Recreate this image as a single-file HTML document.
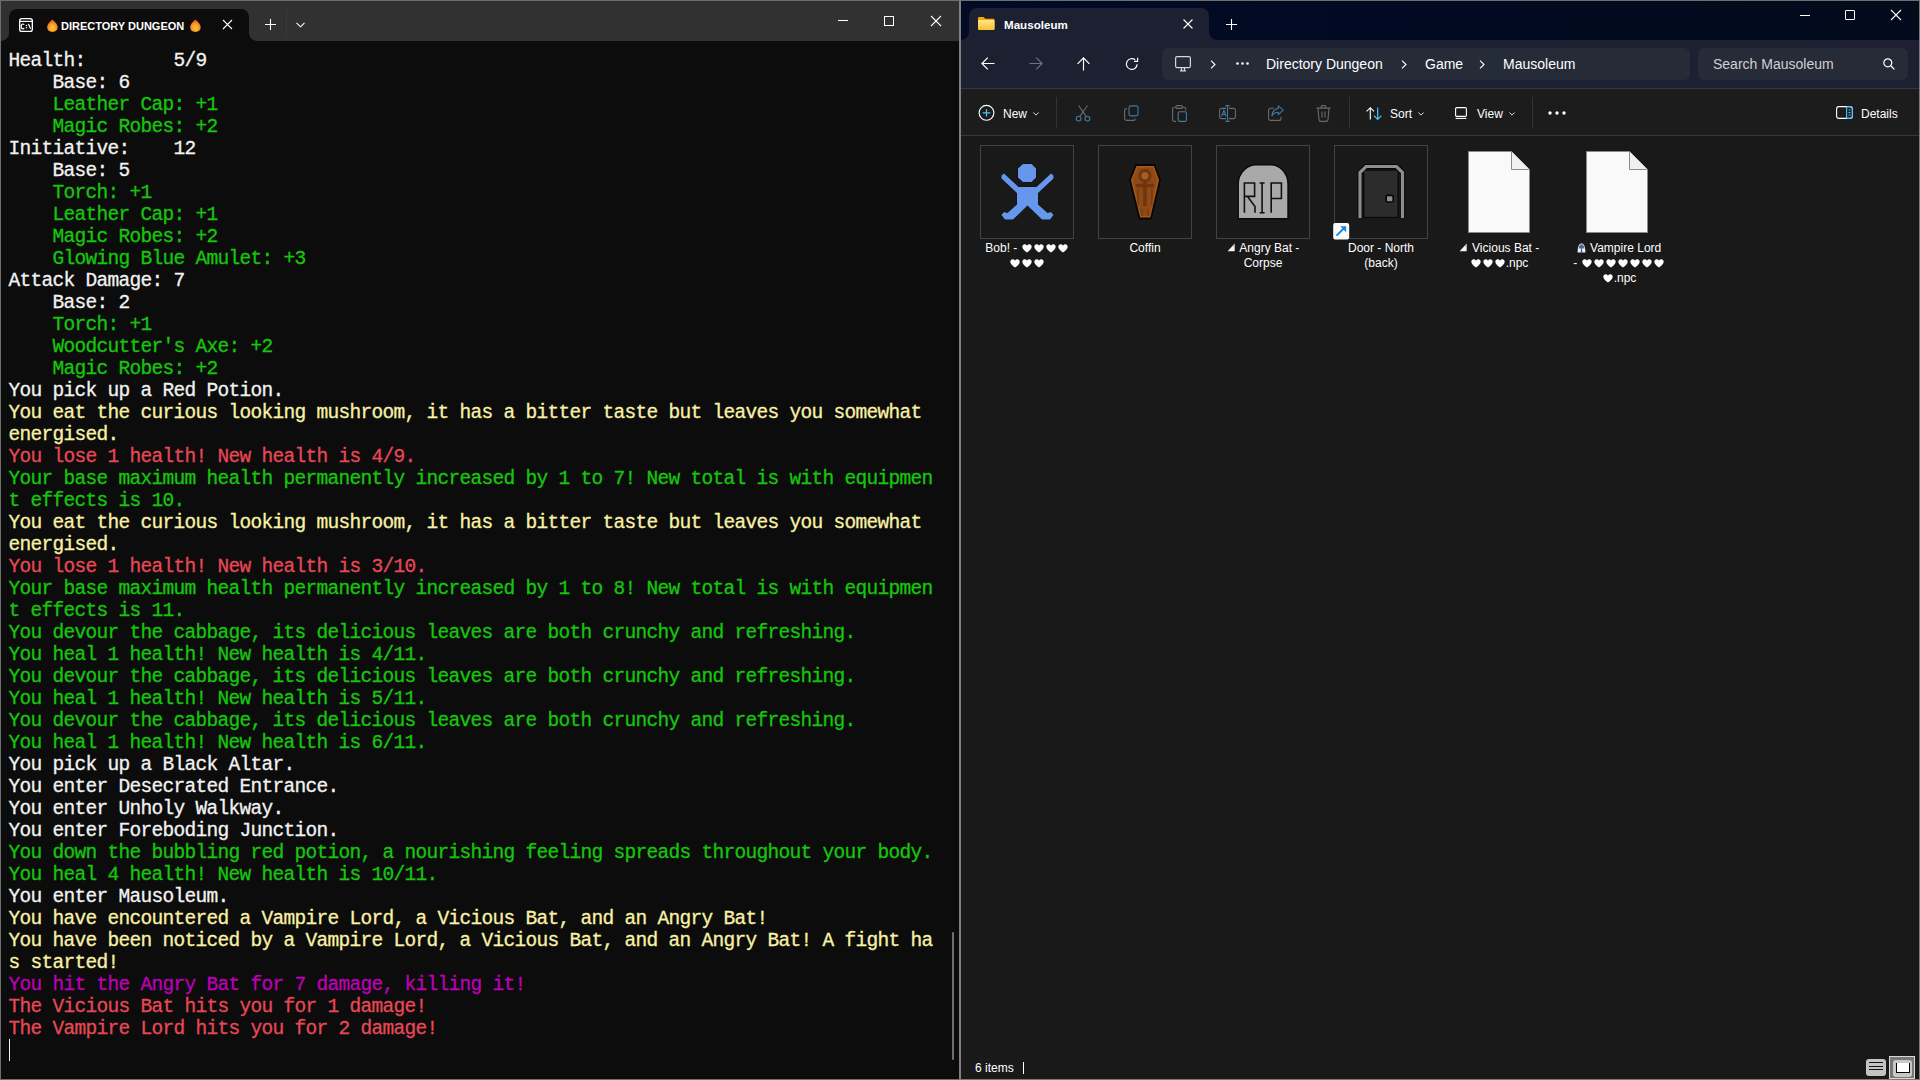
<!DOCTYPE html>
<html><head><meta charset="utf-8">
<style>
*{margin:0;padding:0;box-sizing:border-box}
html,body{width:1920px;height:1080px;overflow:hidden;background:#0c0c0c;font-family:"Liberation Sans",sans-serif;position:relative}
.a{position:absolute}
svg{position:absolute;overflow:visible}
/* ---------- terminal ---------- */
#term{position:absolute;left:0;top:0;width:960px;height:1080px;background:#0c0c0c;border:1px solid #6e6e6e;border-right-color:#808080}
#ttitle{position:absolute;left:1px;top:1px;width:958px;height:40px;background:#313131}
#ttab{position:absolute;left:9px;top:9px;width:240px;height:32px;background:#0c0c0c;border-radius:8px 8px 0 0}
#ttab:before,#ttab:after{content:"";position:absolute;bottom:0;width:8px;height:8px}
#ttab:before{left:-8px;background:radial-gradient(circle at 0 0,transparent 7.5px,#0c0c0c 8.3px)}
#ttab:after{right:-8px;background:radial-gradient(circle at 100% 0,transparent 7.5px,#0c0c0c 8.3px)}
#tlines{position:absolute;left:8.5px;top:50px;font-family:"Liberation Mono",monospace;font-size:19.5px;letter-spacing:-0.7019px;-webkit-text-stroke:0.3px;line-height:22px;color:#f2f2f2}
#tlines div{height:22px;white-space:pre}
.w{color:#f2f2f2}.g{color:#16c60c}.y{color:#f9f1a5}.r{color:#e74856}.m{color:#be00b6}
#ttabtxt{left:61px;top:18px;font-size:11px;font-weight:bold;color:#fff;line-height:16px;white-space:nowrap}
/* ---------- explorer ---------- */
#exp{position:absolute;left:960px;top:0;width:960px;height:1080px;background:#191919;border:1px solid #808080;border-top-color:#6e6e6e;border-right-color:#7a7a7a;border-bottom-color:#7a7a7a}
#etitle{position:absolute;left:961px;top:1px;width:958px;height:39px;background:linear-gradient(90deg,#010b26 0%,#010a22 45%,#020a1b 100%)}
#etab{position:absolute;left:969px;top:8px;width:240px;height:32px;background:#1c2030;border-radius:8px 8px 0 0}
#etab:before,#etab:after{content:"";position:absolute;bottom:0;width:8px;height:8px}
#etab:before{left:-8px;background:radial-gradient(circle at 0 0,transparent 7.5px,#1c2030 8.3px)}
#etab:after{right:-8px;background:radial-gradient(circle at 100% 0,transparent 7.5px,#1c2030 8.3px)}
#enav{position:absolute;left:961px;top:40px;width:958px;height:48px;background:#1c2030}
#eaddr{position:absolute;left:1162px;top:48px;width:528px;height:32px;background:#262b38;border-radius:6px}
#esearch{position:absolute;left:1698px;top:48px;width:210px;height:32px;background:#262b38;border-radius:6px}
#etool{position:absolute;left:961px;top:88px;width:958px;height:48px;background:#1c1c1c;border-top:1px solid #373737;border-bottom:1px solid #373737}
.ad{font-size:14px;color:#fff;line-height:18px;white-space:nowrap}
.tb{font-size:12px;color:#fff;line-height:16px;white-space:nowrap}
.lbl{position:absolute;width:110px;text-align:center;font-size:12px;line-height:15px;color:#fff}
.box{position:absolute;width:94px;height:94px;border:1px solid #434343;background:#191919}
</style></head><body>
<!-- ================= TERMINAL ================= -->
<div id="term"></div>
<div id="ttitle"></div>
<div id="ttab"></div>
<!-- terminal icon -->
<svg style="left:19px;top:18px" width="14" height="14" viewBox="0 0 14 14">
  <rect x="0.65" y="0.65" width="12.7" height="12.7" rx="2.2" fill="none" stroke="#fff" stroke-width="1.3"/>
  <line x1="1" y1="3.4" x2="13" y2="3.4" stroke="#fff" stroke-width="1.2"/>
  <path d="M5.2 6.7C4.9 6.2 4.4 6 3.8 6C2.8 6 2.2 6.9 2.2 8.4C2.2 9.9 2.8 10.8 3.8 10.8C4.4 10.8 4.9 10.6 5.2 10.1" fill="none" stroke="#fff" stroke-width="1.2"/>
  <circle cx="7.5" cy="7.6" r="0.75" fill="#fff"/><circle cx="7.5" cy="9.7" r="0.75" fill="#fff"/>
  <path d="M9.4 6L11.6 10.7" stroke="#fff" stroke-width="1.2"/>
</svg>
<!-- flames -->
<svg style="left:47px;top:19px" width="11" height="13" viewBox="0 0 11 13">
  <defs><radialGradient id="fl" cx="0.5" cy="0.68" r="0.6"><stop offset="0" stop-color="#fcc43c"/><stop offset="0.45" stop-color="#f9a52c"/><stop offset="0.8" stop-color="#f47a22"/><stop offset="1" stop-color="#ef5f1c"/></radialGradient></defs>
  <path d="M5.4 0.5C7.2 2.3 10.7 5 10.7 8.3C10.7 11.1 8.4 13 5.4 13C2.4 13 0.2 11.1 0.2 8.3C0.2 5 3.6 2.3 5.4 0.5Z" fill="url(#fl)"/>
</svg>
<div id="ttabtxt" class="a">DIRECTORY DUNGEON</div>
<svg style="left:190px;top:19px" width="11" height="13" viewBox="0 0 11 13">
  <path d="M5.4 0.5C7.2 2.3 10.7 5 10.7 8.3C10.7 11.1 8.4 13 5.4 13C2.4 13 0.2 11.1 0.2 8.3C0.2 5 3.6 2.3 5.4 0.5Z" fill="url(#fl)"/>
</svg>
<!-- tab close -->
<svg style="left:222px;top:19px" width="11" height="11" viewBox="0 0 11 11"><path d="M1 1L10 10M10 1L1 10" stroke="#fff" stroke-width="1.1"/></svg>
<!-- new tab + -->
<svg style="left:265px;top:19px" width="11" height="11" viewBox="0 0 11 11"><path d="M5.5 0V11M0 5.5H11" stroke="#fff" stroke-width="1.1"/></svg>
<div class="a" style="left:286px;top:9px;width:1px;height:28px;background:#3a3a3a"></div>
<svg style="left:296px;top:22px" width="9" height="6" viewBox="0 0 9 6"><path d="M0.5 0.8L4.5 4.8L8.5 0.8" fill="none" stroke="#fff" stroke-width="1.1"/></svg>
<!-- window controls -->
<div class="a" style="left:838px;top:20px;width:10px;height:1px;background:#fff"></div>
<div class="a" style="left:884px;top:16px;width:10px;height:10px;border:1px solid #fff"></div>
<svg style="left:931px;top:16px" width="10" height="10" viewBox="0 0 10 10"><path d="M0 0L10 10M10 0L0 10" stroke="#fff" stroke-width="1.1"/></svg>
<div id="tlines">
<div class="w">Health:        5/9</div>
<div class="w">    Base: 6</div>
<div class="g">    Leather Cap: +1</div>
<div class="g">    Magic Robes: +2</div>
<div class="w">Initiative:    12</div>
<div class="w">    Base: 5</div>
<div class="g">    Torch: +1</div>
<div class="g">    Leather Cap: +1</div>
<div class="g">    Magic Robes: +2</div>
<div class="g">    Glowing Blue Amulet: +3</div>
<div class="w">Attack Damage: 7</div>
<div class="w">    Base: 2</div>
<div class="g">    Torch: +1</div>
<div class="g">    Woodcutter&#x27;s Axe: +2</div>
<div class="g">    Magic Robes: +2</div>
<div class="w">You pick up a Red Potion.</div>
<div class="y">You eat the curious looking mushroom, it has a bitter taste but leaves you somewhat</div>
<div class="y">energised.</div>
<div class="r">You lose 1 health! New health is 4/9.</div>
<div class="g">Your base maximum health permanently increased by 1 to 7! New total is with equipmen</div>
<div class="g">t effects is 10.</div>
<div class="y">You eat the curious looking mushroom, it has a bitter taste but leaves you somewhat</div>
<div class="y">energised.</div>
<div class="r">You lose 1 health! New health is 3/10.</div>
<div class="g">Your base maximum health permanently increased by 1 to 8! New total is with equipmen</div>
<div class="g">t effects is 11.</div>
<div class="g">You devour the cabbage, its delicious leaves are both crunchy and refreshing.</div>
<div class="g">You heal 1 health! New health is 4/11.</div>
<div class="g">You devour the cabbage, its delicious leaves are both crunchy and refreshing.</div>
<div class="g">You heal 1 health! New health is 5/11.</div>
<div class="g">You devour the cabbage, its delicious leaves are both crunchy and refreshing.</div>
<div class="g">You heal 1 health! New health is 6/11.</div>
<div class="w">You pick up a Black Altar.</div>
<div class="w">You enter Desecrated Entrance.</div>
<div class="w">You enter Unholy Walkway.</div>
<div class="w">You enter Foreboding Junction.</div>
<div class="g">You down the bubbling red potion, a nourishing feeling spreads throughout your body.</div>
<div class="g">You heal 4 health! New health is 10/11.</div>
<div class="w">You enter Mausoleum.</div>
<div class="y">You have encountered a Vampire Lord, a Vicious Bat, and an Angry Bat!</div>
<div class="y">You have been noticed by a Vampire Lord, a Vicious Bat, and an Angry Bat! A fight ha</div>
<div class="y">s started!</div>
<div class="m">You hit the Angry Bat for 7 damage, killing it!</div>
<div class="r">The Vicious Bat hits you for 1 damage!</div>
<div class="r">The Vampire Lord hits you for 2 damage!</div>
</div>
<!-- scrollbar -->
<div class="a" style="left:952px;top:932px;width:2px;height:128px;background:#6e6e6e;border-radius:1px"></div>
<!-- cursor -->
<div class="a" style="left:9px;top:1039px;width:1px;height:22px;background:#f2f2f2"></div>

<!-- ================= EXPLORER ================= -->
<div id="exp"></div>
<div id="etitle"></div>
<div id="etab"></div>
<!-- folder icon -->
<svg style="left:978px;top:17px" width="16.5" height="13" viewBox="0 0 17 13" preserveAspectRatio="none">
  <defs><linearGradient id="fo" x1="0" y1="0" x2="0" y2="1"><stop offset="0" stop-color="#ffe48a"/><stop offset="1" stop-color="#f9c22e"/></linearGradient></defs>
  <path d="M0 1.2C0 .5.5 0 1.2 0H5.6L7.6 1.8H15.8C16.5 1.8 17 2.3 17 3V11.8C17 12.5 16.5 13 15.8 13H1.2C.5 13 0 12.5 0 11.8Z" fill="#f2a80d"/>
  <path d="M0 4.2C0 3.6.5 3.1 1.2 3.1H15.8C16.5 3.1 17 3.6 17 4.2V11.8C17 12.5 16.5 13 15.8 13H1.2C.5 13 0 12.5 0 11.8Z" fill="url(#fo)"/>
</svg>
<div class="a" style="left:1004px;top:17px;font-size:11.6px;font-weight:bold;color:#fff;line-height:16px">Mausoleum</div>
<svg style="left:1183px;top:19px" width="10" height="10" viewBox="0 0 10 10"><path d="M.5 .5L9.5 9.5M9.5 .5L.5 9.5" stroke="#fff" stroke-width="1.1"/></svg>
<svg style="left:1226px;top:19px" width="11" height="11" viewBox="0 0 11 11"><path d="M5.5 0V11M0 5.5H11" stroke="#fff" stroke-width="1.1"/></svg>
<!-- window controls -->
<div class="a" style="left:1800px;top:15px;width:10px;height:1px;background:#fff"></div>
<div class="a" style="left:1845px;top:10px;width:10px;height:10px;border:1px solid #fff;border-radius:1px"></div>
<svg style="left:1891px;top:10px" width="10" height="10" viewBox="0 0 10 10"><path d="M0 0L10 10M10 0L0 10" stroke="#fff" stroke-width="1.1"/></svg>

<div id="enav"></div>
<!-- nav arrows -->
<svg style="left:981px;top:57px" width="14" height="13" viewBox="0 0 14 13"><path d="M13.5 6.5H1M6.8 .6L.9 6.5L6.8 12.4" fill="none" stroke="#fff" stroke-width="1.2"/></svg>
<svg style="left:1029px;top:57px" width="14" height="13" viewBox="0 0 14 13"><path d="M.5 6.5H13M7.2 .6L13.1 6.5L7.2 12.4" fill="none" stroke="#6d7080" stroke-width="1.2"/></svg>
<svg style="left:1077px;top:57px" width="13" height="14" viewBox="0 0 13 14"><path d="M6.5 13.5V1M.6 6.8L6.5 .9L12.4 6.8" fill="none" stroke="#fff" stroke-width="1.2"/></svg>
<svg style="left:1125px;top:57px" width="14" height="14" viewBox="0 0 14 14"><path d="M12.2 7.4A5.4 5.4 0 1 1 10.3 2.9" fill="none" stroke="#fff" stroke-width="1.2"/><path d="M12.6 .8V4.4H9" fill="none" stroke="#fff" stroke-width="1.2"/></svg>
<div id="eaddr"></div>
<!-- computer icon -->
<svg style="left:1175px;top:56px" width="16" height="16" viewBox="0 0 16 16"><rect x=".6" y=".6" width="14.8" height="11" rx="1.6" fill="none" stroke="#d8d8d8" stroke-width="1.2"/><path d="M5 14.8H11M6.5 12V14.5M9.5 12V14.5" stroke="#d8d8d8" stroke-width="1.2"/></svg>
<svg style="left:1210px;top:60px" width="7" height="9" viewBox="0 0 7 9"><path d="M1 .6L5 4.5L1 8.4" fill="none" stroke="#fff" stroke-width="1.1"/></svg>
<svg style="left:1236px;top:62px" width="13" height="3" viewBox="0 0 13 3"><circle cx="1.5" cy="1.5" r="1.3" fill="#fff"/><circle cx="6.5" cy="1.5" r="1.3" fill="#fff"/><circle cx="11.5" cy="1.5" r="1.3" fill="#fff"/></svg>
<div class="a ad" style="left:1266px;top:55px">Directory Dungeon</div>
<svg style="left:1401px;top:60px" width="7" height="9" viewBox="0 0 7 9"><path d="M1 .6L5 4.5L1 8.4" fill="none" stroke="#fff" stroke-width="1.1"/></svg>
<div class="a ad" style="left:1425px;top:55px">Game</div>
<svg style="left:1479px;top:60px" width="7" height="9" viewBox="0 0 7 9"><path d="M1 .6L5 4.5L1 8.4" fill="none" stroke="#fff" stroke-width="1.1"/></svg>
<div class="a ad" style="left:1503px;top:55px">Mausoleum</div>
<div id="esearch"></div>
<div class="a ad" style="left:1713px;top:55px;color:#d0d0d0">Search Mausoleum</div>
<svg style="left:1883px;top:58px" width="12" height="12" viewBox="0 0 12 12"><circle cx="4.8" cy="4.8" r="4" fill="none" stroke="#fff" stroke-width="1.2"/><path d="M7.7 7.7L11.4 11.4" stroke="#fff" stroke-width="1.3"/></svg>

<div id="etool"></div>
<!-- New -->
<svg style="left:978px;top:104px" width="17" height="17" viewBox="0 0 17 17"><circle cx="8.5" cy="8.8" r="7.4" fill="none" stroke="#fff" stroke-width="1.1"/><path d="M8.5 5V12.6M4.7 8.8H12.3" stroke="#4cc2ff" stroke-width="1.2"/></svg>
<div class="a tb" style="left:1003px;top:106px">New</div>
<svg style="left:1033px;top:112px" width="6" height="4" viewBox="0 0 6 4"><path d="M.4 .5L3 3.1L5.6 .5" fill="none" stroke="#ddd" stroke-width="1"/></svg>
<div class="a" style="left:1056px;top:97px;width:1px;height:31px;background:#333"></div>
<!-- cut -->
<svg style="left:1075px;top:105px" width="16" height="17" viewBox="0 0 16 17"><circle cx="3.6" cy="13.6" r="2.4" fill="none" stroke="#3d7ba4" stroke-width="1.1"/><circle cx="12.4" cy="13.6" r="2.4" fill="none" stroke="#3d7ba4" stroke-width="1.1"/><path d="M4.8 11.6L12.4 .5M11.2 11.6L3.6 .5" fill="none" stroke="#6a6a6a" stroke-width="1.1"/></svg>
<!-- copy -->
<svg style="left:1124px;top:105px" width="15" height="16" viewBox="0 0 15 16"><rect x="5" y=".9" width="9" height="10" rx="1.8" fill="none" stroke="#3d7ba4" stroke-width="1.1"/><path d="M2.8 3.6A2 2 0 0 0 .6 5.6V13.2A2.2 2.2 0 0 0 2.8 15.4H9.4A2 2 0 0 0 11.4 13.6" fill="none" stroke="#6a6a6a" stroke-width="1.1"/></svg>
<!-- paste -->
<svg style="left:1172px;top:105px" width="15" height="17" viewBox="0 0 15 17"><path d="M3.6 2.2H2.4A1.8 1.8 0 0 0 .6 4V14.6A1.8 1.8 0 0 0 2.4 16.4H4M10.8 2.2H12A1.8 1.8 0 0 1 13.8 4V5.6" fill="none" stroke="#6a6a6a" stroke-width="1.1"/><rect x="4" y=".6" width="6.4" height="2.8" rx="1" fill="none" stroke="#6a6a6a" stroke-width="1.1"/><rect x="6.2" y="6.8" width="8.2" height="9.6" rx="1.4" fill="none" stroke="#3d7ba4" stroke-width="1.1"/></svg>
<!-- rename -->
<svg style="left:1219px;top:105px" width="17" height="17" viewBox="0 0 17 17"><path d="M7 3.4H2.4A1.8 1.8 0 0 0 .6 5.2V11.8A1.8 1.8 0 0 0 2.4 13.6H7M10 3.4H14.6A1.8 1.8 0 0 1 16.4 5.2V11.8A1.8 1.8 0 0 1 14.6 13.6H10" fill="none" stroke="#6a6a6a" stroke-width="1.1"/><path d="M8.5 .6V16.4M6.4 .6H10.6M6.4 16.4H10.6" fill="none" stroke="#3d7ba4" stroke-width="1.1"/><path d="M2.6 11.4L4.9 5.2L7.2 11.4M3.4 9.4H6.4" fill="none" stroke="#3d7ba4" stroke-width="1.1"/></svg>
<!-- share -->
<svg style="left:1268px;top:105px" width="16" height="16" viewBox="0 0 16 16"><path d="M6 3.2H2.6A2 2 0 0 0 .6 5.2V13.4A2 2 0 0 0 2.6 15.4H11A2 2 0 0 0 13 13.4V11.8" fill="none" stroke="#6a6a6a" stroke-width="1.1"/><path d="M10.2 .8L15.2 5.2L10.2 9.6V7.2C7 7.2 5.2 8.6 4 11C4.2 7 6.4 4 10.2 3.4Z" fill="none" stroke="#3d7ba4" stroke-width="1.1" stroke-linejoin="round"/></svg>
<!-- delete -->
<svg style="left:1316px;top:105px" width="15" height="17" viewBox="0 0 15 17"><path d="M.5 3.1H14.5M5.2 3V1.6A1 1 0 0 1 6.2 .6H8.8A1 1 0 0 1 9.8 1.6V3M2 3.2L3 14.6A2 2 0 0 0 5 16.4H10A2 2 0 0 0 12 14.6L13 3.2M6 6.5V12.8M9 6.5V12.8" fill="none" stroke="#6a6a6a" stroke-width="1.1"/></svg>
<div class="a" style="left:1349px;top:97px;width:1px;height:31px;background:#333"></div>
<!-- sort -->
<svg style="left:1366px;top:107px" width="16" height="13" viewBox="0 0 16 13"><path d="M4.3 12.6V.9M.6 4.4L4.3 .7L8 4.4" fill="none" stroke="#fff" stroke-width="1.1"/><path d="M11.7 .4V12.1M8 8.6L11.7 12.3L15.4 8.6" fill="none" stroke="#4cc2ff" stroke-width="1.2"/></svg>
<div class="a tb" style="left:1390px;top:106px">Sort</div>
<svg style="left:1418px;top:112px" width="6" height="4" viewBox="0 0 6 4"><path d="M.4 .5L3 3.1L5.6 .5" fill="none" stroke="#ddd" stroke-width="1"/></svg>
<!-- view -->
<svg style="left:1455px;top:107px" width="12" height="12" viewBox="0 0 12 12"><rect x=".6" y=".6" width="10.8" height="8.8" rx="1.2" fill="none" stroke="#fff" stroke-width="1.1"/><path d="M.6 11.4H11.4" stroke="#fff" stroke-width="1.1"/></svg>
<div class="a tb" style="left:1477px;top:106px">View</div>
<svg style="left:1509px;top:112px" width="6" height="4" viewBox="0 0 6 4"><path d="M.4 .5L3 3.1L5.6 .5" fill="none" stroke="#ddd" stroke-width="1"/></svg>
<div class="a" style="left:1532px;top:97px;width:1px;height:31px;background:#333"></div>
<svg style="left:1548px;top:111px" width="18" height="4" viewBox="0 0 18 4"><circle cx="2" cy="2" r="1.7" fill="#fff"/><circle cx="9" cy="2" r="1.7" fill="#fff"/><circle cx="16" cy="2" r="1.7" fill="#fff"/></svg>
<!-- details -->
<svg style="left:1836px;top:106px" width="17" height="13" viewBox="0 0 17 13"><rect x=".6" y=".6" width="15.8" height="11.8" rx="2.4" fill="none" stroke="#fff" stroke-width="1.1"/><path d="M10.6 .8V12.2" stroke="#4cc2ff" stroke-width="1.1"/><path d="M10.8 .6H14A2.4 2.4 0 0 1 16.4 3V10A2.4 2.4 0 0 1 14 12.4H10.8" fill="none" stroke="#4cc2ff" stroke-width="1.1"/><path d="M12.5 4H14.5M12.5 6.5H14.5M12.5 9H14.5" stroke="#4cc2ff" stroke-width="1"/></svg>
<div class="a tb" style="left:1861px;top:106px">Details</div>

<!-- item boxes -->
<div class="box" style="left:980px;top:145px"></div>
<div class="box" style="left:1098px;top:145px"></div>
<div class="box" style="left:1216px;top:145px"></div>
<div class="box" style="left:1334px;top:145px"></div>
<!-- Bob -->
<svg style="left:995px;top:160px" width="65" height="65" viewBox="0 0 65 65">
  <g fill="#6797ec" stroke="#0c0c0c" stroke-width="0.6" paint-order="stroke">
  <path d="M28 4H36.5L41 8.5V17.5L36.5 22H28L23 17.5V8.5Z"/>
  <path d="M9 13.5L23.5 27H41.5L56 13.5L58.5 15.5V18.5L43 33V44.5L52.5 53L56 52L58.5 55L55 59.6H47L32.5 45.5L18 59.6H10L6.5 55L9 52L12.5 53L22 44.5V33L6.5 18.5V15.5Z"/>
  </g>
</svg>
<!-- Coffin -->
<svg style="left:1125px;top:160px" width="40" height="65" viewBox="0 0 40 65">
  <path d="M11 5H29.5L35 20L26 58.5H14.5L5 20Z" fill="#a65a1c" stroke="#060606" stroke-width="1.8" stroke-linejoin="round"/>
  <path d="M12.6 7.4H27.9L32.5 20L24.5 56.3H16L7.5 20Z" fill="#8e4a16"/>
  <ellipse cx="20" cy="15.8" rx="5" ry="5.3" fill="#a85e1e" stroke="#70350c" stroke-width="3"/>
  <path d="M10.8 25.6H29" stroke="#70350c" stroke-width="3.6"/>
  <path d="M20 22V46" stroke="#70350c" stroke-width="3.6"/>
  <path d="M13.2 29V45M26.8 29V45M16.8 49V56M23.2 49V56" stroke="#7a3b0e" stroke-width="1.6"/>
</svg>
<!-- RIP -->
<svg style="left:1233px;top:160px" width="60" height="65" viewBox="0 0 60 65">
  <path d="M5.2 58.7V24C5.2 12 15 4.8 23 4.8H38C46 4.8 55 12 55 24V58.7Z" fill="#a9a9a9" stroke="#0a0a0a" stroke-width="1.4"/>
  <path d="M11.4 52.7V23H21.6V36.4H11.4M14.5 36.4L22 46.5V52.7" fill="none" stroke="#111" stroke-width="1.6"/>
  <path d="M26.6 23H31.6M29.1 23V52.7M26.6 52.7H31.6" fill="none" stroke="#111" stroke-width="1.6"/>
  <path d="M38.2 52.7V23H48.4V38.5H38.2" fill="none" stroke="#111" stroke-width="1.6"/>
</svg>
<!-- Door -->
<svg style="left:1330px;top:160px" width="90" height="85" viewBox="0 0 90 85">
  <path d="M30 58V12.5L36 6.5H66.5L72.5 12.5V58" fill="none" stroke="#050505" stroke-width="5.2" stroke-linejoin="miter"/>
  <rect x="33.8" y="10.2" width="34.2" height="47.2" fill="#2c2c2c" stroke="#050505" stroke-width="1"/>
  <path d="M30 58V12.5L36 6.5H66.5L72.5 12.5V58" fill="none" stroke="#8d8d8d" stroke-width="3.2"/>
  <rect x="56.2" y="35.4" width="7" height="6.6" rx="1.2" fill="#8d8d8d" stroke="#050505" stroke-width="1.6"/>
  <rect x="3.2" y="63" width="16" height="16.4" rx="2" fill="#fafafa"/>
  <path d="M6.5 75.6L15 67.2" stroke="#1787e0" stroke-width="1.9"/>
  <path d="M10.2 66.2H16.2V72.2Z" fill="#1787e0"/>
</svg>
<!-- files -->
<svg style="left:1467px;top:150px" width="64" height="84" viewBox="0 0 64 84">
  <path d="M1.5 1.5H44.5L62.5 19.5V82.5H1.5Z" fill="#f9f9f9" stroke="#8a8a8a" stroke-width="1"/>
  <path d="M44.5 1.5V19.5H62.5" fill="#f0f0f0" stroke="#8a8a8a" stroke-width="1"/>
</svg>
<svg style="left:1585px;top:150px" width="64" height="84" viewBox="0 0 64 84">
  <path d="M1.5 1.5H44.5L62.5 19.5V82.5H1.5Z" fill="#f9f9f9" stroke="#8a8a8a" stroke-width="1"/>
  <path d="M44.5 1.5V19.5H62.5" fill="#f0f0f0" stroke="#8a8a8a" stroke-width="1"/>
</svg>
<!-- labels -->
<div class="lbl" style="left:972px;top:241px">Bob! - <span class="hs"><svg class="ht" width="10" height="9" viewBox="0 0 10 9" style="position:relative;display:inline-block;vertical-align:-0.5px;margin:0 1px"><path d="M5 8.6C2.6 6.9 0.3 5 0.3 2.8C0.3 1.3 1.4 0.3 2.7 0.3C3.7 0.3 4.5 0.9 5 1.7C5.5 0.9 6.3 0.3 7.3 0.3C8.6 0.3 9.7 1.3 9.7 2.8C9.7 5 7.4 6.9 5 8.6Z" fill="#fff"/></svg><svg class="ht" width="10" height="9" viewBox="0 0 10 9" style="position:relative;display:inline-block;vertical-align:-0.5px;margin:0 1px"><path d="M5 8.6C2.6 6.9 0.3 5 0.3 2.8C0.3 1.3 1.4 0.3 2.7 0.3C3.7 0.3 4.5 0.9 5 1.7C5.5 0.9 6.3 0.3 7.3 0.3C8.6 0.3 9.7 1.3 9.7 2.8C9.7 5 7.4 6.9 5 8.6Z" fill="#fff"/></svg><svg class="ht" width="10" height="9" viewBox="0 0 10 9" style="position:relative;display:inline-block;vertical-align:-0.5px;margin:0 1px"><path d="M5 8.6C2.6 6.9 0.3 5 0.3 2.8C0.3 1.3 1.4 0.3 2.7 0.3C3.7 0.3 4.5 0.9 5 1.7C5.5 0.9 6.3 0.3 7.3 0.3C8.6 0.3 9.7 1.3 9.7 2.8C9.7 5 7.4 6.9 5 8.6Z" fill="#fff"/></svg><svg class="ht" width="10" height="9" viewBox="0 0 10 9" style="position:relative;display:inline-block;vertical-align:-0.5px;margin:0 1px"><path d="M5 8.6C2.6 6.9 0.3 5 0.3 2.8C0.3 1.3 1.4 0.3 2.7 0.3C3.7 0.3 4.5 0.9 5 1.7C5.5 0.9 6.3 0.3 7.3 0.3C8.6 0.3 9.7 1.3 9.7 2.8C9.7 5 7.4 6.9 5 8.6Z" fill="#fff"/></svg></span><br><span class="hs"><svg class="ht" width="10" height="9" viewBox="0 0 10 9" style="position:relative;display:inline-block;vertical-align:-0.5px;margin:0 1px"><path d="M5 8.6C2.6 6.9 0.3 5 0.3 2.8C0.3 1.3 1.4 0.3 2.7 0.3C3.7 0.3 4.5 0.9 5 1.7C5.5 0.9 6.3 0.3 7.3 0.3C8.6 0.3 9.7 1.3 9.7 2.8C9.7 5 7.4 6.9 5 8.6Z" fill="#fff"/></svg><svg class="ht" width="10" height="9" viewBox="0 0 10 9" style="position:relative;display:inline-block;vertical-align:-0.5px;margin:0 1px"><path d="M5 8.6C2.6 6.9 0.3 5 0.3 2.8C0.3 1.3 1.4 0.3 2.7 0.3C3.7 0.3 4.5 0.9 5 1.7C5.5 0.9 6.3 0.3 7.3 0.3C8.6 0.3 9.7 1.3 9.7 2.8C9.7 5 7.4 6.9 5 8.6Z" fill="#fff"/></svg><svg class="ht" width="10" height="9" viewBox="0 0 10 9" style="position:relative;display:inline-block;vertical-align:-0.5px;margin:0 1px"><path d="M5 8.6C2.6 6.9 0.3 5 0.3 2.8C0.3 1.3 1.4 0.3 2.7 0.3C3.7 0.3 4.5 0.9 5 1.7C5.5 0.9 6.3 0.3 7.3 0.3C8.6 0.3 9.7 1.3 9.7 2.8C9.7 5 7.4 6.9 5 8.6Z" fill="#fff"/></svg></span></div>
<div class="lbl" style="left:1090px;top:241px">Coffin</div>
<div class="lbl" style="left:1208px;top:241px"><svg width="9" height="9" viewBox="0 0 9 9" style="position:relative;display:inline-block;vertical-align:0px;margin-right:1px"><path d="M0.6 8.3L7.7 0.6V8.3Z" fill="#f4f4f4"/><path d="M7.7 0.6L6 3.5L7.7 4Z" fill="#c9a46a"/></svg> Angry Bat -<br>Corpse</div>
<div class="lbl" style="left:1326px;top:241px">Door - North<br>(back)</div>
<div class="lbl" style="left:1444px;top:241px"><svg width="9" height="9" viewBox="0 0 9 9" style="position:relative;display:inline-block;vertical-align:0px;margin-right:1px"><path d="M0.6 8.3L7.7 0.6V8.3Z" fill="#f4f4f4"/><path d="M7.7 0.6L6 3.5L7.7 4Z" fill="#c9a46a"/></svg> Vicious Bat -<br><span class="hs"><svg class="ht" width="10" height="9" viewBox="0 0 10 9" style="position:relative;display:inline-block;vertical-align:-0.5px;margin:0 1px"><path d="M5 8.6C2.6 6.9 0.3 5 0.3 2.8C0.3 1.3 1.4 0.3 2.7 0.3C3.7 0.3 4.5 0.9 5 1.7C5.5 0.9 6.3 0.3 7.3 0.3C8.6 0.3 9.7 1.3 9.7 2.8C9.7 5 7.4 6.9 5 8.6Z" fill="#fff"/></svg><svg class="ht" width="10" height="9" viewBox="0 0 10 9" style="position:relative;display:inline-block;vertical-align:-0.5px;margin:0 1px"><path d="M5 8.6C2.6 6.9 0.3 5 0.3 2.8C0.3 1.3 1.4 0.3 2.7 0.3C3.7 0.3 4.5 0.9 5 1.7C5.5 0.9 6.3 0.3 7.3 0.3C8.6 0.3 9.7 1.3 9.7 2.8C9.7 5 7.4 6.9 5 8.6Z" fill="#fff"/></svg><svg class="ht" width="10" height="9" viewBox="0 0 10 9" style="position:relative;display:inline-block;vertical-align:-0.5px;margin:0 1px"><path d="M5 8.6C2.6 6.9 0.3 5 0.3 2.8C0.3 1.3 1.4 0.3 2.7 0.3C3.7 0.3 4.5 0.9 5 1.7C5.5 0.9 6.3 0.3 7.3 0.3C8.6 0.3 9.7 1.3 9.7 2.8C9.7 5 7.4 6.9 5 8.6Z" fill="#fff"/></svg></span>.npc</div>
<div class="lbl" style="left:1564px;top:241px"><svg width="9" height="10" viewBox="0 0 9 10" style="position:relative;display:inline-block;vertical-align:-1px;margin-right:1px"><path d="M4.5 0.6C2.4 0.6 0.6 3 0.6 9.6H8.4C8.4 3 6.6 0.6 4.5 0.6Z" fill="#f0f0f0"/><path d="M4.5 1.2C3.2 1.2 2 2.6 1.6 5.4H7.4C7 2.6 5.8 1.2 4.5 1.2Z" fill="#4a6a9a"/><path d="M4.5 3L3.6 9.6H5.4Z" fill="#3a4a8a"/></svg> Vampire Lord<br>- <span class="hs"><svg class="ht" width="10" height="9" viewBox="0 0 10 9" style="position:relative;display:inline-block;vertical-align:-0.5px;margin:0 1px"><path d="M5 8.6C2.6 6.9 0.3 5 0.3 2.8C0.3 1.3 1.4 0.3 2.7 0.3C3.7 0.3 4.5 0.9 5 1.7C5.5 0.9 6.3 0.3 7.3 0.3C8.6 0.3 9.7 1.3 9.7 2.8C9.7 5 7.4 6.9 5 8.6Z" fill="#fff"/></svg><svg class="ht" width="10" height="9" viewBox="0 0 10 9" style="position:relative;display:inline-block;vertical-align:-0.5px;margin:0 1px"><path d="M5 8.6C2.6 6.9 0.3 5 0.3 2.8C0.3 1.3 1.4 0.3 2.7 0.3C3.7 0.3 4.5 0.9 5 1.7C5.5 0.9 6.3 0.3 7.3 0.3C8.6 0.3 9.7 1.3 9.7 2.8C9.7 5 7.4 6.9 5 8.6Z" fill="#fff"/></svg><svg class="ht" width="10" height="9" viewBox="0 0 10 9" style="position:relative;display:inline-block;vertical-align:-0.5px;margin:0 1px"><path d="M5 8.6C2.6 6.9 0.3 5 0.3 2.8C0.3 1.3 1.4 0.3 2.7 0.3C3.7 0.3 4.5 0.9 5 1.7C5.5 0.9 6.3 0.3 7.3 0.3C8.6 0.3 9.7 1.3 9.7 2.8C9.7 5 7.4 6.9 5 8.6Z" fill="#fff"/></svg><svg class="ht" width="10" height="9" viewBox="0 0 10 9" style="position:relative;display:inline-block;vertical-align:-0.5px;margin:0 1px"><path d="M5 8.6C2.6 6.9 0.3 5 0.3 2.8C0.3 1.3 1.4 0.3 2.7 0.3C3.7 0.3 4.5 0.9 5 1.7C5.5 0.9 6.3 0.3 7.3 0.3C8.6 0.3 9.7 1.3 9.7 2.8C9.7 5 7.4 6.9 5 8.6Z" fill="#fff"/></svg><svg class="ht" width="10" height="9" viewBox="0 0 10 9" style="position:relative;display:inline-block;vertical-align:-0.5px;margin:0 1px"><path d="M5 8.6C2.6 6.9 0.3 5 0.3 2.8C0.3 1.3 1.4 0.3 2.7 0.3C3.7 0.3 4.5 0.9 5 1.7C5.5 0.9 6.3 0.3 7.3 0.3C8.6 0.3 9.7 1.3 9.7 2.8C9.7 5 7.4 6.9 5 8.6Z" fill="#fff"/></svg><svg class="ht" width="10" height="9" viewBox="0 0 10 9" style="position:relative;display:inline-block;vertical-align:-0.5px;margin:0 1px"><path d="M5 8.6C2.6 6.9 0.3 5 0.3 2.8C0.3 1.3 1.4 0.3 2.7 0.3C3.7 0.3 4.5 0.9 5 1.7C5.5 0.9 6.3 0.3 7.3 0.3C8.6 0.3 9.7 1.3 9.7 2.8C9.7 5 7.4 6.9 5 8.6Z" fill="#fff"/></svg><svg class="ht" width="10" height="9" viewBox="0 0 10 9" style="position:relative;display:inline-block;vertical-align:-0.5px;margin:0 1px"><path d="M5 8.6C2.6 6.9 0.3 5 0.3 2.8C0.3 1.3 1.4 0.3 2.7 0.3C3.7 0.3 4.5 0.9 5 1.7C5.5 0.9 6.3 0.3 7.3 0.3C8.6 0.3 9.7 1.3 9.7 2.8C9.7 5 7.4 6.9 5 8.6Z" fill="#fff"/></svg></span><br><span class="hs"><svg class="ht" width="10" height="9" viewBox="0 0 10 9" style="position:relative;display:inline-block;vertical-align:-0.5px;margin:0 1px"><path d="M5 8.6C2.6 6.9 0.3 5 0.3 2.8C0.3 1.3 1.4 0.3 2.7 0.3C3.7 0.3 4.5 0.9 5 1.7C5.5 0.9 6.3 0.3 7.3 0.3C8.6 0.3 9.7 1.3 9.7 2.8C9.7 5 7.4 6.9 5 8.6Z" fill="#fff"/></svg></span>.npc</div>


<!-- status bar -->
<div class="a" style="left:975px;top:1060px;font-size:12px;line-height:16px;color:#fff">6 items</div>
<div class="a" style="left:1023px;top:1062px;width:1px;height:12px;background:#fff"></div>
<!-- view buttons -->
<div class="a" style="left:1866px;top:1059px;width:20px;height:17px;background:#c4c4c4;border-radius:3px"></div>
<div class="a" style="left:1869px;top:1062px;width:14px;height:1.4px;background:#111"></div>
<div class="a" style="left:1869px;top:1066px;width:14px;height:1.4px;background:#111"></div>
<div class="a" style="left:1869px;top:1069px;width:14px;height:1.4px;background:#111"></div>
<div class="a" style="left:1889px;top:1056px;width:26px;height:23px;background:#777;border:1px solid #d8d8d8"></div>
<div class="a" style="left:1893px;top:1060px;width:19px;height:17px;background:#c8c8c8;border-radius:3px"></div>
<div class="a" style="left:1896px;top:1063px;width:14px;height:10px;background:#fff;border:1.5px solid #000;border-top:none"></div>

</body></html>
